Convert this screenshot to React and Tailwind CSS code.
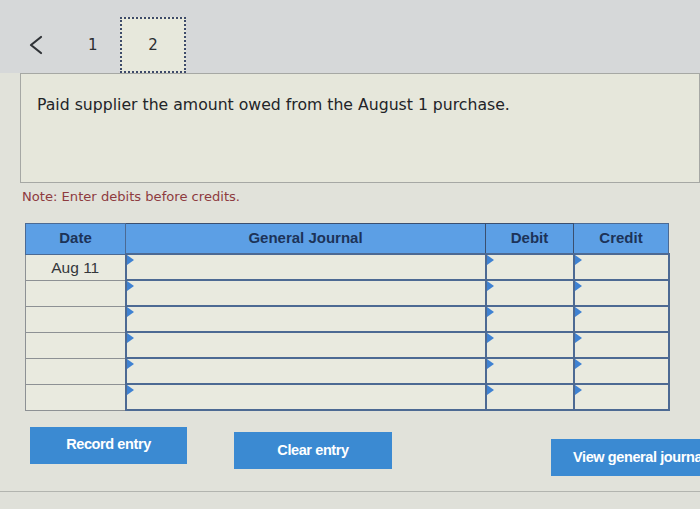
import React from 'react';

const rows = ['Aug 11', '', '', '', '', ''];

const Flag = () => (
  <span className="absolute left-0 top-0 w-0 h-0 border-t-[5px] border-b-[5px] border-l-[7px] border-t-transparent border-b-transparent border-l-[#3f82d2]" />
);

const InputCell = ({ w }) => (
  <td className={`relative ${w} h-[26px] border-2 border-[#4d6a93] bg-[#e9eadf] p-0`}>
    <Flag />
  </td>
);

const App = () => {
  return (
    <div className="w-[700px] h-[509px] overflow-hidden bg-[#e1e2da] font-['DejaVu_Sans',sans-serif]">
      <div className="bg-[#d6d8d9] pt-[17px]">
        <div className="flex items-end h-[56px]">
          <div className="w-[120px] h-full flex items-center">
            <svg className="ml-[27px]" width="18" height="20" viewBox="0 0 18 20">
              <path d="M14 2 L4 10 L14 18" fill="none" stroke="#2f3236" strokeWidth="2.2" strokeLinecap="round" strokeLinejoin="round" />
            </svg>
            <span className="ml-[43px] text-[15px] text-[#2b2d30]">1</span>
          </div>
          <div className="w-[66px] h-full border-2 border-dotted border-[#3d4a6a] bg-[#e7e8dc] flex items-center justify-center text-[15px] text-[#2b2d30]">
            2
          </div>
        </div>
      </div>

      <div className="ml-[20px] h-[110px] border border-[#a6a8a4] bg-[#e6e7db] pl-[16px] pt-[19px]">
        <p className="text-[15.7px] text-[#222428]">Paid supplier the amount owed from the August 1 purchase.</p>
      </div>

      <p className="ml-[22px] mt-[4px] text-[13.1px] text-[#8e3b3f]">Note: Enter debits before credits.</p>

      <table className="ml-[25px] mt-[16px] border-collapse font-['Liberation_Sans',sans-serif]">
        <thead>
          <tr className="bg-[#5c9fe5] text-[#1c3358] font-bold text-[15px]">
            <th className="w-[100px] h-[31px] border border-[#4b6a94] font-bold">Date</th>
            <th className="w-[360px] border border-[#3a4f6f] font-bold">General Journal</th>
            <th className="w-[88px] border border-[#3a4f6f] font-bold">Debit</th>
            <th className="w-[95px] border border-[#4b6a94] font-bold">Credit</th>
          </tr>
        </thead>
        <tbody>
          {rows.map((d, i) => (
            <tr key={i}>
              <td className="w-[100px] h-[26px] border border-[#8d9194] bg-[#e9eadf] text-center text-[15.5px] text-[#34373b] align-top pt-[1px]">
                {d}
              </td>
              <InputCell w="w-[360px]" />
              <InputCell w="w-[88px]" />
              <InputCell w="w-[95px]" />
            </tr>
          ))}
        </tbody>
      </table>

      <div className="flex items-start h-[66px] font-['Liberation_Sans',sans-serif] font-bold text-[14.5px] text-white tracking-[-0.4px]">
        <button className="shrink-0 ml-[30px] mt-[16px] w-[157px] h-[37px] bg-[#3b8ad2] pb-[2px]">Record entry</button>
        <button className="shrink-0 ml-[47px] mt-[21px] w-[158px] h-[37px] bg-[#3b8ad2]">Clear entry</button>
        <button className="shrink-0 ml-[159px] mt-[28px] w-[160px] h-[37px] bg-[#3b8ad2] text-left pl-[22px] whitespace-nowrap">View general journal</button>
      </div>

      <div className="mt-[14px] border-t border-[#b2b4af] h-[20px] bg-[#dfe0d9]" />
    </div>
  );
};

export default App;
